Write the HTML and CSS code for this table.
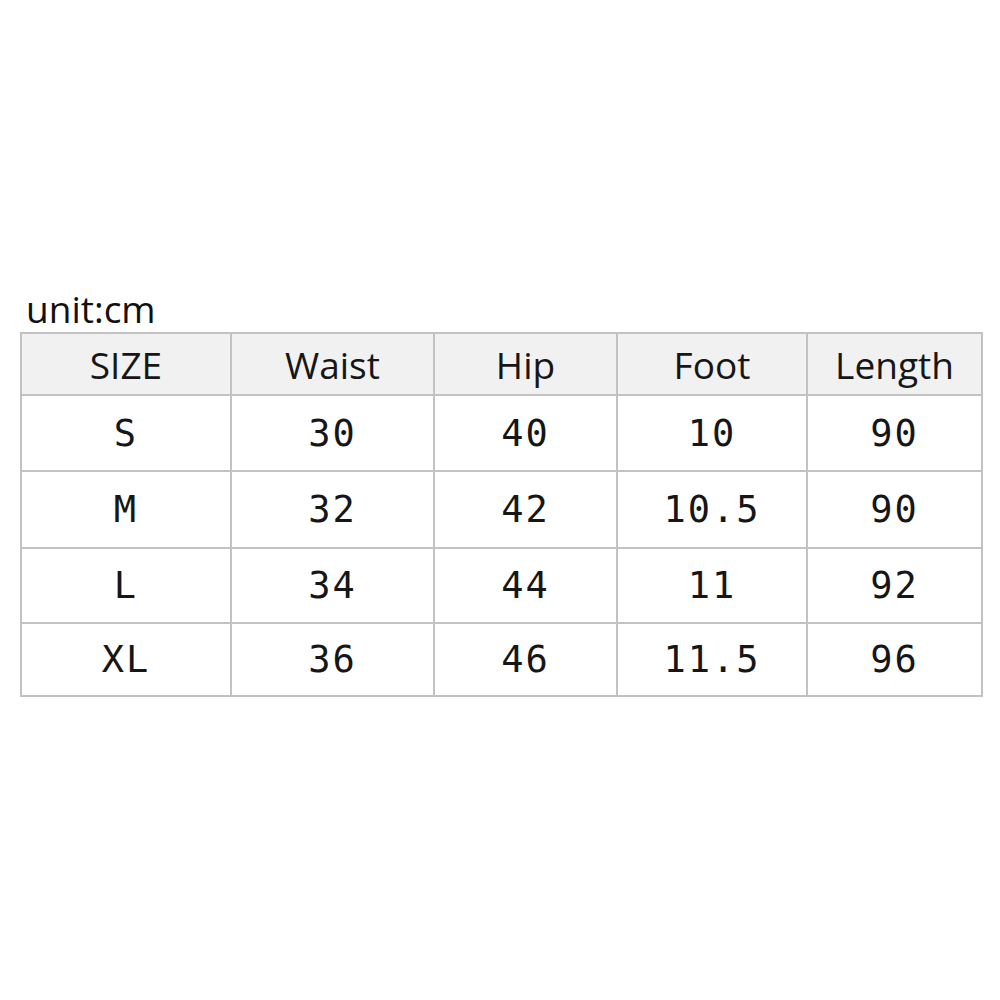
FILE: index.html
```html
<!DOCTYPE html>
<html>
<head>
<meta charset="utf-8">
<link rel="stylesheet" href="styles.css">
</head>
<body>
<div class="page">
  <div class="unit">unit:cm</div>
  <table class="sizes">
    <colgroup>
      <col class="c1"><col class="c2"><col class="c3"><col class="c4"><col class="c5">
    </colgroup>
    <thead>
      <tr class="head"><th>SIZE</th><th>Waist</th><th>Hip</th><th>Foot</th><th>Length</th></tr>
    </thead>
    <tbody>
      <tr class="r1"><td>S</td><td>30</td><td>40</td><td>10</td><td>90</td></tr>
      <tr class="r2"><td>M</td><td>32</td><td>42</td><td>10.5</td><td>90</td></tr>
      <tr class="r3"><td>L</td><td>34</td><td>44</td><td>11</td><td>92</td></tr>
      <tr class="r4"><td>XL</td><td>36</td><td>46</td><td>11.5</td><td>96</td></tr>
    </tbody>
  </table>
</div>
</body>
</html>
```
FILE: styles.css
```css
html, body {
  margin: 0;
  padding: 0;
  background: #ffffff;
}
.page {
  padding-top: 286px;
  padding-left: 20px;
}
.unit {
  font-family: "Open Sans", sans-serif;
  font-size: 37px;
  line-height: 46px;
  color: #111;
  padding-left: 6px;
  letter-spacing: 0;
}
.sizes {
  border-collapse: collapse;
  table-layout: fixed;
  width: 963px;
  color: #161616;
}
.c1 { width: 210px; }
.c2 { width: 203px; }
.c3 { width: 183px; }
.c4 { width: 190px; }
.c5 { width: 175px; }
.sizes th, .sizes td {
  border: 2px solid #c2c2c2;
  text-align: center;
  padding: 0;
}
.sizes th {
  background: #f1f1f1;
  font-family: "Open Sans", sans-serif;
  font-weight: normal;
  font-size: 37px;
  height: 60px;
  padding-top: 0;
  letter-spacing: 0;
}
.sizes td {
  font-family: "DejaVu Sans Mono", monospace;
  font-size: 37px;
  letter-spacing: 2px;
}
.r1 td { height: 74px; }
.r2 td { height: 75px; }
.r3 td { height: 73px; }
.r4 td { height: 71px; }
```
